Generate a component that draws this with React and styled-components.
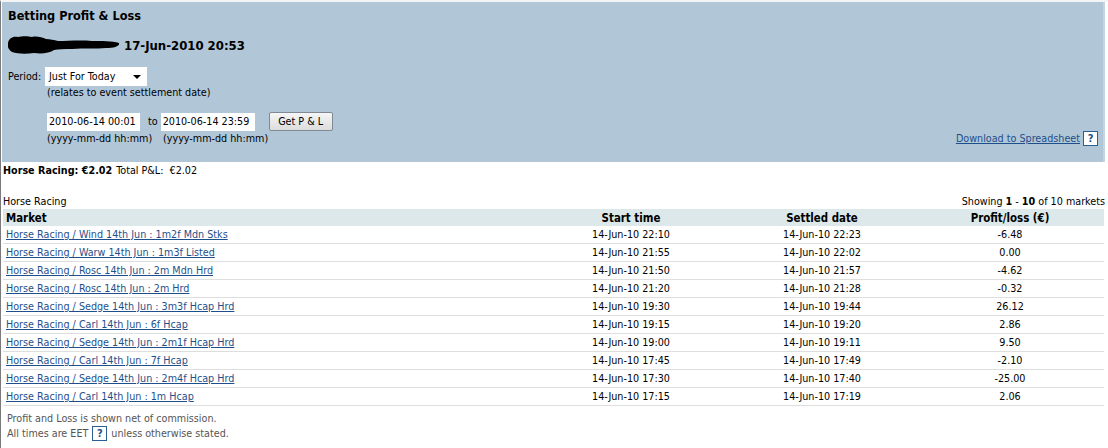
import React from "react";
import styled, { createGlobalStyle } from "styled-components";

const FONT = `"DejaVu Sans Condensed", "DejaVu Sans", sans-serif`;

const Global = createGlobalStyle`
  html, body { margin: 0; padding: 0; background: #fff; }
  body { font-family: ${FONT}; font-size: 10.7px; color: #000; font-stretch: condensed; }
`;

const Frame = styled.div`
  width: 1108px;
  height: 448px;
  box-sizing: border-box;
  border-left: 1px solid #7a7a7a;
  border-top: 2px solid #f4f4f4;
  padding-left: 1px;
  overflow: hidden;
`;

const Panel = styled.div`
  width: 1103px;
  height: 160px;
  box-sizing: border-box;
  background: #b1c6d6;
  border-right: 2px solid #c4d4e0;
  padding: 6px 0 0 6px;
  display: flex;
  flex-direction: column;
  position: relative;
`;

const Title = styled.div`
  font-weight: bold;
  font-size: 12.6px;
  line-height: 16px;
`;

const UserLine = styled.div`
  display: flex;
  align-items: center;
  gap: 4px;
  margin-top: 13px;
  height: 16px;
  font-weight: bold;
  font-size: 13px;
`;

const Row = styled.div`
  display: flex;
  align-items: center;
  margin-top: ${(p) => p.$mt || 0}px;
  padding-left: ${(p) => p.$pl || 0}px;
`;

const Label = styled.span`
  width: 37px;
  line-height: 18px;
`;

const Select = styled.div`
  width: 102px;
  height: 19px;
  background: #fff;
  display: flex;
  align-items: center;
  justify-content: space-between;
  padding: 0 6px 0 4px;
  box-sizing: border-box;
`;

const Caret = styled.span`
  width: 0;
  height: 0;
  border-left: 4px solid transparent;
  border-right: 4px solid transparent;
  border-top: 4px solid #000;
`;

const Hint = styled.div`
  padding-left: 39px;
  line-height: 14px;
  margin-top: ${(p) => p.$mt || 0}px;
  display: flex;
`;

const HintItem = styled.span`
  width: ${(p) => p.$w}px;
`;

const Input = styled.div`
  width: ${(p) => p.$w}px;
  height: 18px;
  background: #fff;
  box-sizing: border-box;
  padding: 0 2px;
  line-height: 18px;
  white-space: nowrap;
`;

const To = styled.span`
  margin: 0 3px 0 8px;
`;

const Button = styled.div`
  margin-left: 14px;
  width: 64px;
  height: 19px;
  box-sizing: border-box;
  border: 1px solid #7f8a94;
  border-radius: 2px;
  background: linear-gradient(#f6f6f6, #dcdcdc);
  display: flex;
  align-items: center;
  justify-content: center;
`;

const Download = styled.div`
  position: absolute;
  right: 5px;
  top: 129px;
  display: flex;
  align-items: center;
  gap: 3px;
`;

const Link = styled.a`
  color: #1f4f8b;
  text-decoration: underline;
  cursor: pointer;
`;

const Help = styled.span`
  display: inline-flex;
  align-items: center;
  justify-content: center;
  width: 13px;
  height: 13px;
  border: 1px solid #2a5f94;
  background: #fff;
  color: #1f4f8b;
  font-weight: bold;
  font-size: 11px;
  line-height: 1;
  vertical-align: middle;
`;

const Summary = styled.div`
  padding: 2px 0 0 1px;
  line-height: 14px;
  display: flex;
  gap: 4px;
`;

const Bold = styled.b`
  font-weight: bold;
`;

const Caption = styled.div`
  margin-top: 17px;
  width: 1103px;
  display: flex;
  justify-content: space-between;
  line-height: 14px;
  padding-left: 1px;
  box-sizing: border-box;
`;

const Table = styled.div`
  width: 1101px;
  margin-left: 1px;
`;

const cols = "531px 194px 188px 188px";

const Head = styled.div`
  display: grid;
  grid-template-columns: ${cols};
  height: 17px;
  align-items: center;
  background: #dce8ea;
  font-weight: bold;
  font-size: 11.4px;
`;

const Cell = styled.div`
  text-align: ${(p) => (p.$left ? "left" : "center")};
  padding-left: ${(p) => (p.$left ? 3 : 0)}px;
  white-space: nowrap;
`;

const BodyRow = styled.div`
  display: grid;
  grid-template-columns: ${cols};
  height: 18px;
  box-sizing: border-box;
  align-items: center;
  border-bottom: 1px solid #dedede;
`;

const Footer = styled.div`
  margin-top: 6px;
  padding-left: 5px;
  color: #555;
  line-height: 14px;
`;

const FooterLine = styled.div`
  display: flex;
  align-items: center;
  gap: 4px;
`;

const rows = [
  ["Horse Racing / Wind 14th Jun : 1m2f Mdn Stks", "14-Jun-10 22:10", "14-Jun-10 22:23", "-6.48"],
  ["Horse Racing / Warw 14th Jun : 1m3f Listed", "14-Jun-10 21:55", "14-Jun-10 22:02", "0.00"],
  ["Horse Racing / Rosc 14th Jun : 2m Mdn Hrd", "14-Jun-10 21:50", "14-Jun-10 21:57", "-4.62"],
  ["Horse Racing / Rosc 14th Jun : 2m Hrd", "14-Jun-10 21:20", "14-Jun-10 21:28", "-0.32"],
  ["Horse Racing / Sedge 14th Jun : 3m3f Hcap Hrd", "14-Jun-10 19:30", "14-Jun-10 19:44", "26.12"],
  ["Horse Racing / Carl 14th Jun : 6f Hcap", "14-Jun-10 19:15", "14-Jun-10 19:20", "2.86"],
  ["Horse Racing / Sedge 14th Jun : 2m1f Hcap Hrd", "14-Jun-10 19:00", "14-Jun-10 19:11", "9.50"],
  ["Horse Racing / Carl 14th Jun : 7f Hcap", "14-Jun-10 17:45", "14-Jun-10 17:49", "-2.10"],
  ["Horse Racing / Sedge 14th Jun : 2m4f Hcap Hrd", "14-Jun-10 17:30", "14-Jun-10 17:40", "-25.00"],
  ["Horse Racing / Carl 14th Jun : 1m Hcap", "14-Jun-10 17:15", "14-Jun-10 17:19", "2.06"],
];

function Scribble() {
  return (
    <svg width="112" height="18" viewBox="0 0 112 18">
      <path
        d="M0 7 C1 2 5 0 10 1 C14 0 20 0 24 1 C28 0 34 1 38 3 C42 3 46 4 50 5 C60 5 72 4 84 5 C94 5 104 5 111 7 C112 10 106 12 98 12 C88 13 76 12 64 13 C56 13 50 13 46 14 C42 17 34 18 26 17 C18 18 10 18 4 16 C1 14 -1 11 0 7 Z"
        fill="#000"
      />
    </svg>
  );
}

export default function App() {
  return (
    <>
      <Global />
      <Frame>
        <Panel>
          <Title>Betting Profit &amp; Loss</Title>
          <UserLine>
            <Scribble />
            <span>17-Jun-2010 20:53</span>
          </UserLine>
          <Row $mt={14}>
            <Label>Period:</Label>
            <Select>
              <span>Just For Today</span>
              <Caret />
            </Select>
          </Row>
          <Hint $mt={0}>(relates to event settlement date)</Hint>
          <Row $mt={12} $pl={39}>
            <Input $w={93}>2010-06-14 00:01</Input>
            <To>to</To>
            <Input $w={94}>2010-06-14 23:59</Input>
            <Button>Get P &amp; L</Button>
          </Row>
          <Hint $mt={1}>
            <HintItem $w={116}>(yyyy-mm-dd hh:mm)</HintItem>
            <HintItem $w={120}>(yyyy-mm-dd hh:mm)</HintItem>
          </Hint>
          <Download>
            <Link>Download to Spreadsheet </Link>
            <Help>?</Help>
          </Download>
        </Panel>
        <Summary>
          <Bold>Horse Racing: €2.02</Bold>
          <span>Total P&amp;L:&nbsp; €2.02</span>
        </Summary>
        <Caption>
          <span>Horse Racing</span>
          <span>
            Showing <Bold>1</Bold> - <Bold>10</Bold> of 10 markets
          </span>
        </Caption>
        <Table>
          <Head>
            <Cell $left>Market</Cell>
            <Cell>Start time</Cell>
            <Cell>Settled date</Cell>
            <Cell>Profit/loss (€)</Cell>
          </Head>
          {rows.map((r) => (
            <BodyRow key={r[0]}>
              <Cell $left>
                <Link>{r[0]}</Link>
              </Cell>
              <Cell>{r[1]}</Cell>
              <Cell>{r[2]}</Cell>
              <Cell>{r[3]}</Cell>
            </BodyRow>
          ))}
        </Table>
        <Footer>
          <div>Profit and Loss is shown net of commission.</div>
          <FooterLine>
            <span>All times are EET</span>
            <Help>?</Help>
            <span>unless otherwise stated.</span>
          </FooterLine>
        </Footer>
      </Frame>
    </>
  );
}
